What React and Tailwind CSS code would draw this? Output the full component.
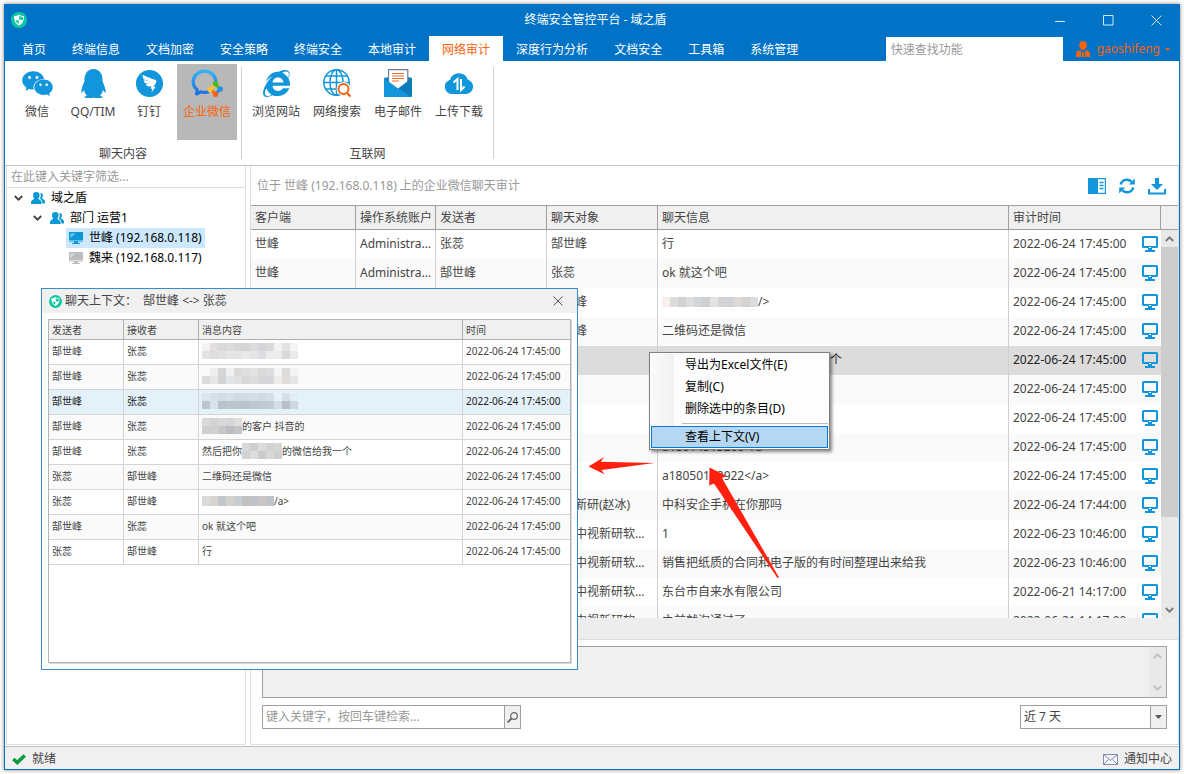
import { FaQq, FaInternetExplorer } from 'react-icons/fa';
import { AiFillWechat, AiFillDingtalkCircle } from 'react-icons/ai';
import clsx from 'clsx';

const tabs = [
  '首页',
  '终端信息',
  '文档加密',
  '安全策略',
  '终端安全',
  '本地审计',
  '网络审计',
  '深度行为分析',
  '文档安全',
  '工具箱',
  '系统管理',
];

const chatRows = [
  { client: '世峰', account: 'Administrator', from: '张蕊', to: '郜世峰', text: '行', time: '2022-06-24 17:45:00' },
  { client: '世峰', account: 'Administrator', from: '郜世峰', to: '张蕊', text: 'ok 就这个吧', time: '2022-06-24 17:45:00' },
  { to: '郜世峰', mosaic: 'link', after: '/>', time: '2022-06-24 17:45:00' },
  { to: '郜世峰', text: '二维码还是微信', time: '2022-06-24 17:45:00' },
  { text: '然后把你', mosaic: 'nameWide', after: '的微信给我一个', time: '2022-06-24 17:45:00', selected: true },
  { time: '2022-06-24 17:45:00' },
  { time: '2022-06-24 17:45:00' },
  { text: 'a18014515260</a>', time: '2022-06-24 17:45:00' },
  { text: 'a18050132922</a>', time: '2022-06-24 17:45:00' },
  { to: '中视新研(赵冰)', text: '中科安企手机在你那吗', time: '2022-06-24 17:44:00' },
  { to: '北京中视新研软件公司', text: '1', time: '2022-06-23 10:46:00' },
  { to: '北京中视新研软件公司', text: '销售把纸质的合同和电子版的有时间整理出来给我', time: '2022-06-23 10:46:00' },
  { to: '北京中视新研软件公司', text: '东台市自来水有限公司', time: '2022-06-21 14:17:00' },
  { to: '北京中视新研软件公司', text: '之前就沟通过了', time: '2022-06-21 14:17:00' },
];

const contextRows = [
  { from: '郜世峰', to: '张蕊', mosaic: 'a' },
  { from: '郜世峰', to: '张蕊', mosaic: 'b' },
  { from: '郜世峰', to: '张蕊', mosaic: 'c', selected: true },
  { from: '郜世峰', to: '张蕊', mosaic: 'short', after: '的客户 抖音的' },
  { from: '郜世峰', to: '张蕊', text: '然后把你', mosaic: 'name', after: '的微信给我一个' },
  { from: '张蕊', to: '郜世峰', text: '二维码还是微信' },
  { from: '张蕊', to: '郜世峰', mosaic: 'd', after: '/a>' },
  { from: '郜世峰', to: '张蕊', text: 'ok 就这个吧' },
  { from: '张蕊', to: '郜世峰', text: '行' },
];

// one list of fills per line of blurred-out blocks
const mosaics = {
  a: [
    ['#f3f3f3', '#e3dfde', '#d9d9da', '#dcdcdc', '#d6d6d8', '#d3d4d6', '#dcdcdd', '#d5d6d9', '#dadada', '#f2f2f3', '#e3e3e3', '#f5f5f6'],
    ['#e3e3e5', '#dedede', '#e1e1e1', '#e7e6e5', '#e4e4e4', '#e8e8e8', '#e4e4e5', '#dcdde0', '#ececec', '#eeebeb', '#d9d9d9', '#e9e9eb'],
  ],
  b: [
    ['#fafafa', '#f0eeec', '#d5d5d5', '#f0f0f0', '#dadada', '#dfdfdf', '#e2e2e2', '#d9d9d9', '#dcdcdc', '#f6f4f3', '#dbdbdb', '#f3f3f3'],
    ['#dadcdc', '#e9e7e5', '#d2d3d5', '#e0e5e9', '#e1e1e1', '#dad8d6', '#dcdcdc', '#d6d6d8', '#d5d7da', '#ececec', '#e1dddb', '#e4e6e8'],
  ],
  c: [
    ['#dbe6ee', '#d5dfe7', '#d2dce4', '#d7e0e7', '#d0dae3', '#d2dce4', '#d5dee6', '#d0dae2', '#d4dee6', '#e4f1f9', '#d6e0e8', '#e2eef6'],
    ['#bcc6ce', '#d8e2ea', '#b9c1c9', '#bdc5cc', '#bcc4cb', '#b8c3cc', '#bdc7cf', '#c1cad1', '#c3ccd4', '#d2dde5', '#b9bfc9', '#ccd7df'],
  ],
  d: [['#dadada', '#d6d3d1', '#c2c7cd', '#d5d1cc', '#c7cdd3', '#c3c1c0', '#bfc2c7', '#c9c6c4', '#bfc4ca']],
  short: [
    ['#dadada', '#d3d3d3', '#d8d8d9', '#d5d5d5', '#dededf'],
    ['#cfcfd0', '#d1d1d1', '#c7c7ca', '#bcbdc0', '#c4c4c5'],
  ],
  name: [
    ['#d8d8d8', '#cfcfcf', '#dcdcdc', '#d2d2d2', '#d6d6d6'],
    ['#d2d2d2', '#dddddd', '#cbcbcb', '#d8d8d8', '#cfcfcf'],
  ],
  nameWide: [['#c8c8c8', '#bfbfbf', '#cccccc', '#c2c2c2', '#c6c6c6', '#c9c9c9']],
  link: [['#f6efeb', '#dcdcdc', '#d2d2d4', '#dedede', '#d3d6d9', '#cfcfd1', '#e3e3e3', '#d4d4d4', '#cfd3d8', '#ded9d6', '#d2d2d2', '#dadde0']],
};

const Mosaic = ({ kind }) => {
  const lines = mosaics[kind];
  return (
    <svg width={lines[0].length * 8} height={lines.length > 1 ? 16 : 10} className="shrink-0" preserveAspectRatio="none" viewBox={`0 0 ${lines[0].length} ${lines.length}`} shapeRendering="crispEdges">
      {lines.map((line, y) => line.map((fill, x) => <rect key={`${x}-${y}`} x={x} y={y} width="1" height="1" fill={fill} />))}
    </svg>
  );
};

const ShieldLogo = ({ size }) => (
  <svg width={size} height={size} viewBox="0 0 16 16" className="shrink-0">
    <circle cx="8" cy="8" r="8" fill="#0cc7a0" />
    <path d="M8 2.500c1.400 1 3 1.600 4.900 1.600 0 4.800-1 7.600-4.900 9.400C4.100 11.700 3.100 8.900 3.100 4.100 5 4.100 6.600 3.500 8 2.500z" fill="#fff" />
    <path d="M8.300 4v4h3.300c.3-1 .4-1.800.4-3.100C10.500 4.800 9.300 4.500 8.300 4zM7.700 8.300H4.500c.6 1.800 1.500 2.900 3.200 3.800z" fill="#0cc7a0" />
  </svg>
);

const WeComIcon = () => (
  <svg width="32" height="28" viewBox="0 0 32 28">
    <defs>
      <linearGradient id="wecom" x1="0" y1="0" x2="0" y2="1">
        <stop offset="0" stopColor="#35b1f5" />
        <stop offset="1" stopColor="#1a6fe0" />
      </linearGradient>
    </defs>
    <path d="M24.800 13C24.800 6.800 20 2.200 13.600 2.200S2.200 6.800 2.200 12.800c0 3.400 1.500 6 4 8L5.600 25l4.200-2.200c2.600.8 5.400.8 8-.1" fill="none" stroke="url(#wecom)" strokeWidth="3.200" strokeLinejoin="round" />
    <g fill="none" strokeWidth="3" strokeLinecap="round">
      <path d="M24.500 15.500l3 3" stroke="#4fb81c" />
      <path d="M29 20.500l-3 3" stroke="#2c8ae8" />
      <path d="M24.500 25l-3-3" stroke="#f26a1b" />
      <path d="M19.500 20l3-3" stroke="#f7c52b" />
    </g>
    <circle cx="24.500" cy="14.500" r="2.600" fill="#4fb81c" />
    <circle cx="29.300" cy="20" r="2.600" fill="#1f8fe8" />
    <circle cx="24.500" cy="25.300" r="2.600" fill="#f7600e" />
    <circle cx="19" cy="20.500" r="2.600" fill="#f8c62e" />
    <circle cx="24.300" cy="20" r="2" fill="#b8b8b8" />
  </svg>
);

const GlobeSearchIcon = () => (
  <svg width="28" height="28" viewBox="0 0 28 28" fill="none">
    <g stroke="#1296db" strokeWidth="1.500">
      <circle cx="13.500" cy="13.500" r="12.700" />
      <ellipse cx="13.500" cy="13.500" rx="6.500" ry="12.700" />
      <path d="M13.500 1v25M1 13.500h25M2.800 7h21.400M2.800 20h21.400" />
    </g>
    <circle cx="20.500" cy="20" r="7" fill="#fff" />
    <circle cx="20.500" cy="20" r="5" stroke="#f9630c" strokeWidth="2" />
    <path d="M24 24l3.500 3.500" stroke="#f9630c" strokeWidth="2.200" />
  </svg>
);

const MailIcon = () => (
  <svg width="28" height="28" viewBox="0 0 28 28">
    <path d="M0 9l5-1h19l4 1v19H0z" fill="#0d7fbd" />
    <path d="M4.500.7h19.300V16L14 21 4.500 15z" fill="#fff" stroke="#6e7f9c" strokeWidth="1.200" />
    <path d="M8 4.500h12M8 7h12M8 9.500h12M8 12h7" stroke="#f26a2a" strokeWidth="1.200" />
    <path d="M0 9l14 10.500L28 28H0z" fill="#1296db" />
    <path d="M14 19.500L28 9v19z" fill="#0b7cba" />
  </svg>
);

const CloudIcon = () => (
  <svg width="28" height="28" viewBox="0 0 28 28">
    <path d="M7.500 25a7.300 7.300 0 0 1-2.400-14.300 9.300 9.300 0 0 1 17.600-.2A7.400 7.400 0 0 1 21 25z" fill="#1296db" />
    <path d="M8.500 13.500l4-3.500v11M19.500 17.500L16 21V10" fill="none" stroke="#fff" strokeWidth="2" />
  </svg>
);

const MonitorIcon = () => (
  <svg width="16" height="16" viewBox="0 0 16 16" className="shrink-0" aria-hidden="true">
    <path d="M1.500 0h13A1.500 1.500 0 0 1 16 1.500v9a1.500 1.500 0 0 1-1.500 1.500H10v2h3v2H3v-2h3v-2H1.500A1.500 1.500 0 0 1 0 10.500v-9A1.500 1.500 0 0 1 1.500 0zM2 2v8h12V2z" fill="#1296db" fillRule="evenodd" />
    <path d="M7 11h2v1H7z" fill="#fff" />
  </svg>
);

const HostIcon = ({ color }) => (
  <svg width="14" height="12" viewBox="0 0 14 12" className="shrink-0">
    <path d="M0 0h14v8H0zM0 8.500h14V9.500H0zM5 9.500h4v1.500h2v1H3v-1h2z" fill={color} />
    <path d="M1.300 3.500L3.500 1.300M1.300 5.500L5.500 1.300" stroke="#fff" strokeWidth=".8" />
  </svg>
);

const GroupIcon = () => (
  <svg width="14" height="12" viewBox="0 0 14 12" className="shrink-0" fill="#0b98d4">
    <path d="M5.300 0c2.200 0 3.300 1.300 3.300 3.100S8 6 7.300 6.600c0 .9 3.300 1.300 3.300 4.200V12H0v-1.200c0-2.900 3.300-3.300 3.300-4.200C2.600 6 2 4.900 2 3.100S3.100 0 5.300 0z" />
    <path d="M9.300 1c1.600-.2 2.700 1 2.700 2.500 0 1.300-.6 2-1.100 2.500 0 .8 3.100 1.500 3.100 3.800V11.500h-2.600c0-2.500-1-3.800-2.500-4.900.8-1.300 1.300-3.700.4-5.600z" />
  </svg>
);

const Chevron = ({ up, className }) => (
  <svg width="9" height="6" viewBox="0 0 9 6" className={clsx('shrink-0', className)} fill="none" stroke="currentColor" strokeWidth="1.800">
    <path d={up ? 'M.8 5l3.700-3.700L8.200 5' : 'M.8 1l3.700 3.700L8.200 1'} />
  </svg>
);

const RibbonButton = ({ label, icon, wide, active }) => (
  <button
    className={clsx(
      'flex h-[76px] flex-col items-center pt-[5px] whitespace-nowrap',
      wide ? 'w-[60px]' : 'w-14',
      active ? 'bg-[#b8b8b8] text-[#f9630c]' : 'text-[#444]'
    )}
  >
    <span className="flex h-7 items-center text-[#1296db]">{icon}</span>
    <span className="mt-[5px] leading-5">{label}</span>
  </button>
);

const RibbonGroup = ({ title, children, className }) => (
  <div className="flex">
    <div className="flex flex-col px-1">
      <div className={clsx('flex', className)}>{children}</div>
      <div className="mt-1.5 text-center leading-4 text-[#444]">{title}</div>
    </div>
    <div className="mt-[3px] h-[92px] w-px bg-[#d0d0d0]" />
  </div>
);

const TreeRow = ({ icon, label, className, open, selected }) => (
  <li className={clsx('flex h-5 items-center', className)}>
    {open && <Chevron className="mr-[5px] text-[#444]" />}
    <span className={clsx('flex h-5 items-center gap-1.5 px-[3px] whitespace-nowrap', selected && 'bg-[#cce8ff]')}>
      {icon}
      {label}
    </span>
  </li>
);

const Header = () => (
  <header className="bg-[#0173c7] text-white">
    <div className="flex h-8 items-center">
      <div className="flex flex-1 pl-[7px]">
        <ShieldLogo size={16} />
      </div>
      <h1>终端安全管控平台 - 域之盾</h1>
      <div className="flex h-full flex-1 justify-end">
        <button aria-label="最小化" className="flex w-12 items-center justify-center">
          <svg width="11" height="11" viewBox="0 0 11 11" stroke="#d5e6f4"><path d="M0 6.500h10" /></svg>
        </button>
        <button aria-label="最大化" className="flex w-12 items-center justify-center">
          <svg width="11" height="11" viewBox="0 0 11 11" stroke="#d5e6f4" fill="none"><path d="M.5.500h9.500v9.500H.5z" /></svg>
        </button>
        <button aria-label="关闭" className="flex w-12 items-center justify-center">
          <svg width="11" height="11" viewBox="0 0 11 11" stroke="#d5e6f4"><path d="M.5.500l10 10M10.500.500l-10 10" /></svg>
        </button>
      </div>
    </div>
    <div className="flex h-[25px] items-end pl-[5px]">
      <nav className="flex h-full">
        {tabs.map((tab) => (
          <button key={tab} className={clsx('px-[13px] pt-0.5 whitespace-nowrap', tab === '网络审计' && 'bg-white text-[#f9630c]')}>
            {tab}
          </button>
        ))}
      </nav>
      <input
        type="text"
        aria-label="快速查找功能"
        placeholder="快速查找功能"
        className="ml-auto h-6 w-[177px] bg-white px-[5px] text-[#444] placeholder:text-[#999] outline-none"
      />
      <button className="mr-2.5 ml-[13px] flex h-6 items-center text-[#f9630c]">
        <svg width="14" height="16" viewBox="0 0 14 16" fill="#f9630c" className="mr-[7px]">
          <path d="M7 0c2.300 0 3.800 1.700 3.800 4S9.300 9 7 9 3.200 6.300 3.200 4 4.700 0 7 0zM3.500 9.300L5 10v6H0v-3c0-2 1.500-3.200 3.500-3.700zM10.500 9.300L9 10v6h5v-3c0-2-1.500-3.200-3.500-3.700zM6.200 11h1.600l.6 5H5.600z" />
        </svg>
        gaoshifeng
        <svg width="5" height="3" viewBox="0 0 5 3" fill="#f9630c" className="ml-[5px]"><path d="M0 0h5L2.500 3z" /></svg>
      </button>
    </div>
  </header>
);

const Ribbon = () => (
  <div className="flex h-[105px] border-b border-[#c4c4c4] bg-white pt-[3px]">
    <RibbonGroup title="聊天内容">
      <RibbonButton label="微信" icon={<AiFillWechat size={35} />} />
      <RibbonButton label="QQ/TIM" icon={<FaQq size={29} />} />
      <RibbonButton label="钉钉" icon={<AiFillDingtalkCircle size={31} />} />
      <RibbonButton label="企业微信" icon={<WeComIcon />} wide active />
    </RibbonGroup>
    <RibbonGroup title="互联网" className="gap-px">
      <RibbonButton label="浏览网站" icon={<FaInternetExplorer size={27} />} wide />
      <RibbonButton label="网络搜索" icon={<GlobeSearchIcon />} wide />
      <RibbonButton label="电子邮件" icon={<MailIcon />} wide />
      <RibbonButton label="上传下载" icon={<CloudIcon />} wide />
    </RibbonGroup>
  </div>
);

const Sidebar = () => (
  <aside className="w-60 shrink-0 border-x border-b border-[#ddd]">
    <input
      type="text"
      aria-label="筛选"
      placeholder="在此键入关键字筛选..."
      className="block h-[22px] w-full border-b border-[#ddd] px-1 placeholder:text-[#999] outline-none"
    />
    <ul className="text-black">
      <TreeRow open className="pl-[7px]" icon={<GroupIcon />} label="域之盾" />
      <TreeRow open className="pl-[26px]" icon={<GroupIcon />} label="部门 运营1" />
      <TreeRow selected className="pl-[59px]" icon={<HostIcon color="#0b98d4" />} label="世峰 (192.168.0.118)" />
      <TreeRow className="pl-[59px]" icon={<HostIcon color="#bdbdbd" />} label="魏来 (192.168.0.117)" />
    </ul>
  </aside>
);

const AuditTable = () => (
  <div className="relative min-h-0 flex-1 overflow-hidden">
    <table className="w-full table-fixed border-separate border-spacing-0 text-left">
      <colgroup>
        <col className="w-[105px]" />
        <col className="w-20" />
        <col className="w-[111px]" />
        <col className="w-[111px]" />
        <col />
        <col className="w-[152px]" />
        <col className="w-[17px]" />
      </colgroup>
      <thead>
        <tr className="h-[25px] bg-[#f0f0f0]">
          {['客户端', '操作系统账户', '发送者', '聊天对象', '聊天信息', '审计时间'].map((name) => (
            <th key={name} className="border-y border-r border-[#a0a0a0] py-0 pr-0 pl-1 font-normal whitespace-nowrap">
              {name}
            </th>
          ))}
          <th className="border-y border-[#a0a0a0] p-0" />
        </tr>
      </thead>
      <tbody>
        {chatRows.map((row, i) => (
          <tr key={i} className={clsx('h-[29px]', row.selected ? 'bg-[#dcdcdc] text-[#222]' : 'even:bg-[#fafafa]')}>
            {[row.client, row.account, row.from, row.to].map((value, n) => (
              <td key={n} className="truncate border-r border-[#d0d0d0] pt-0 pr-0.5 pb-0.5 pl-1">{value}</td>
            ))}
            <td className="border-r border-[#d0d0d0] pt-0 pr-0 pb-0.5 pl-1 whitespace-nowrap">
              <div className="flex items-center">
                {row.text}
                {row.mosaic && <Mosaic kind={row.mosaic} />}
                {row.after}
              </div>
            </td>
            <td className="pt-0 pr-[3px] pb-0.5 pl-1 whitespace-nowrap">
              <div className="flex items-center justify-between">
                {row.time}
                <MonitorIcon />
              </div>
            </td>
            <td className="p-0" />
          </tr>
        ))}
      </tbody>
    </table>
    <div className="absolute top-[25px] right-0 bottom-0 flex w-[17px] flex-col items-center bg-[#e9e9e9] text-[#777]">
      <div className="flex h-[17px] items-center"><Chevron up /></div>
      <div className="h-[270px] w-full bg-[#cdcdcd]" />
      <div className="mt-auto flex h-[17px] items-center"><Chevron /></div>
    </div>
  </div>
);

const MainPanel = () => (
  <main className="flex min-w-0 flex-1 flex-col border-x border-b border-[#ddd]">
    <div className="flex h-[39px] shrink-0 items-center pr-3 pl-1.5">
      <h2 className="text-[#999]">位于 世峰 (192.168.0.118) 上的企业微信聊天审计</h2>
      <div className="ml-auto flex gap-3">
        <button aria-label="布局">
          <svg width="18" height="18" viewBox="0 0 18 18">
            <path d="M0 1h18v16H0z" fill="#1296db" />
            <path d="M10 2.200h6.800v13.600H10z" fill="#fff" />
            <path d="M11.500 5.500h4M11.500 8.500h4M11.500 11.500h4" stroke="#1296db" strokeWidth="1.500" />
          </svg>
        </button>
        <button aria-label="刷新">
          <svg width="18" height="18" viewBox="0 0 18 18">
            <path d="M2.600 7.500A6.500 6.500 0 0 1 13.500 4.700M15.400 10.500A6.500 6.500 0 0 1 4.500 13.300" fill="none" stroke="#1296db" strokeWidth="2.400" />
            <path d="M16.800 1.500v6h-6zM1.200 16.500v-6h6z" fill="#1296db" />
          </svg>
        </button>
        <button aria-label="下载">
          <svg width="18" height="18" viewBox="0 0 18 18" fill="#1296db">
            <path d="M7 1h4v6h4l-6 6-6-6h4zM0 12h2v3.500h14V12h2v5.500H0z" />
          </svg>
        </button>
      </div>
    </div>
    <AuditTable />
    <div className="h-[22px] shrink-0 border-b border-[#ddd] bg-[#ededed]" />
    <div className="shrink-0 px-[11px] pt-1.5 pb-[15px]">
      <div className="flex h-[52px] border border-[#a0a0a0] bg-[#f0f0f0]">
        <textarea readOnly aria-label="聊天详情" className="flex-1 resize-none p-1 outline-none" />
        <div className="flex w-[17px] flex-col items-center justify-between bg-[#e9e9e9] py-1.5 text-[#c0c0c0]">
          <Chevron up />
          <Chevron />
        </div>
      </div>
      <div className="mt-[7px] flex justify-between">
        <form className="flex h-6 w-[259px] border border-[#a0a0a0]" onSubmit={(e) => e.preventDefault()}>
          <input
            type="text"
            aria-label="检索"
            placeholder="键入关键字，按回车键检索..."
            className="min-w-0 flex-1 px-[3px] placeholder:text-[#999] outline-none"
          />
          <button aria-label="搜索" className="flex w-4 items-center justify-center border-l border-[#a0a0a0] bg-[#f0f0f0]">
            <svg width="11" height="11" viewBox="0 0 11 11" fill="none" stroke="#666" strokeWidth="1.200">
              <circle cx="7" cy="4" r="3.300" />
              <path d="M4.500 6.500L.5 10.500" strokeWidth="1.800" />
            </svg>
          </button>
        </form>
        <div className="relative h-6 w-[147px] border border-[#a0a0a0]">
          <select aria-label="时间范围" className="h-full w-full appearance-none bg-white pl-[3px] outline-none">
            <option>近 7 天</option>
          </select>
          <span className="pointer-events-none absolute inset-y-0 right-0 flex w-4 items-center justify-center border-l border-[#a0a0a0] bg-[#f0f0f0]">
            <svg width="7" height="4" viewBox="0 0 7 4" fill="#555"><path d="M0 0h7L3.500 4z" /></svg>
          </span>
        </div>
      </div>
    </div>
  </main>
);

const ContextDialog = () => (
  <section
    role="dialog"
    aria-label="聊天上下文"
    className="absolute top-[288px] left-[41px] flex h-[382px] w-[537px] flex-col border border-[#3a8dca] bg-white"
  >
    <div className="flex h-6 items-center bg-[#f0f0f0] pr-3.5 pl-[7px]">
      <ShieldLogo size={13} />
      <h3 className="ml-[3px] flex gap-1.5">
        <span>聊天上下文：</span>
        <span>郜世峰 &lt;-&gt; 张蕊</span>
      </h3>
      <button aria-label="关闭" className="ml-auto">
        <svg width="10" height="10" viewBox="0 0 10 10" stroke="#555"><path d="M.5.500l9 9M9.500.500l-9 9" /></svg>
      </button>
    </div>
    <div className="m-1.5 flex-1 border border-[#b4b4b4] shadow-[1px_1px_0_#d8d8d8]">
      <table className="w-full table-fixed border-separate border-spacing-0 text-left text-[10px] leading-4">
        <colgroup>
          <col className="w-[75px]" />
          <col className="w-[75px]" />
          <col />
          <col className="w-[107px]" />
        </colgroup>
        <thead>
          <tr className="h-5 bg-[#f0f0f0]">
            {['发送者', '接收者', '消息内容', '时间'].map((name) => (
              <th key={name} className="border-r border-b border-[#b0b0b0] px-[3px] py-0 font-normal last:border-r-0">{name}</th>
            ))}
          </tr>
        </thead>
        <tbody>
          {contextRows.map((row, i) => (
            <tr key={i} className={clsx('h-[25px]', row.selected ? 'bg-[#e4f1f9] text-[#222]' : 'even:bg-[#fafafa]')}>
              <td className="border-r border-b border-[#d4d4d4] px-[3px] pt-0 pb-0.5">{row.from}</td>
              <td className="border-r border-b border-[#d4d4d4] px-[3px] pt-0 pb-0.5">{row.to}</td>
              <td className="border-r border-b border-[#d4d4d4] px-[3px] pt-0 pb-0.5 whitespace-nowrap">
                <div className="flex items-center">
                  {row.text}
                  {row.mosaic && <Mosaic kind={row.mosaic} />}
                  {row.after}
                </div>
              </td>
              <td className="border-b border-[#d4d4d4] px-[3px] pt-0 pb-0.5 whitespace-nowrap">2022-06-24 17:45:00</td>
            </tr>
          ))}
        </tbody>
      </table>
    </div>
  </section>
);

const ContextMenu = () => (
  <div role="menu" className="absolute top-[352px] left-[649px] w-[181px] border border-[#808080] bg-[#fdfdfd] p-px text-black shadow-[2px_2px_3px_rgba(0,0,0,0.45)]">
    <div className="bg-linear-to-r from-[#fafafa] to-[#f1f1f1] bg-[length:23px_100%] bg-no-repeat">
      {['导出为Excel文件(E)', '复制(C)', '删除选中的条目(D)'].map((item) => (
        <button key={item} role="menuitem" className="block h-[22px] w-full pl-[34px] text-left">
          {item}
        </button>
      ))}
      <div className="ml-[31px] h-[6px] pt-[3px]"><div className="h-px bg-[#bdbdbd]" /></div>
    </div>
    <button role="menuitem" className="block h-[22px] w-full border border-[#0078d7] bg-[#b5d7f3] pl-[33px] text-left leading-5">
      查看上下文(V)
    </button>
  </div>
);

const Arrows = () => (
  <svg width="200" height="130" viewBox="585 452 200 130" fill="#ff2010" className="pointer-events-none absolute top-[452px] left-[585px]" aria-hidden="true">
    <path d="M588.500 466.500L604 457l-3.200 4.700 53.700 1.300-53 7 3 4.300z" />
    <path d="M709.500 467.500l17 8.500-4.500 2 57 99.500-1.500.5-63.500-94.500-4.800 2z" />
  </svg>
);

export default function App() {
  return (
    <div className="relative flex h-screen flex-col bg-white p-1 font-['Noto_Sans','Noto_Sans_CJK_SC',sans-serif] text-xs text-[#444]">
      <div className="flex min-h-0 flex-1 flex-col shadow-[0_0_4px_rgba(0,0,0,0.5)]">
        <Header />
        <div className="flex min-h-0 flex-1 flex-col border-x border-b border-[#0173c7] bg-white">
          <Ribbon />
          <div className="flex min-h-0 flex-1 gap-1 pb-px pl-px">
            <Sidebar />
            <MainPanel />
          </div>
          <footer className="flex h-[23px] shrink-0 items-center border-t border-[#bdbdbd] bg-[#f0f0f0] px-[7px] pt-0.5">
            <svg width="14" height="11" viewBox="0 0 14 11" fill="none" stroke="#0a9b3c" strokeWidth="3.600">
              <path d="M1.300 5l4 3.500L12.700 1.500" />
            </svg>
            <span className="ml-1.5">就绪</span>
            <button className="ml-auto flex items-center gap-1.5">
              <svg width="15" height="11" viewBox="0 0 15 11" fill="#f4f7fd" stroke="#7f8db5">
                <path d="M.5.500h14v10H.5zM.5.500l7 6 7-6M.5 10.500l5-5M14.500 10.500l-5-5" />
              </svg>
              通知中心
            </button>
          </footer>
        </div>
      </div>
      <ContextMenu />
      <ContextDialog />
      <Arrows />
    </div>
  );
}
